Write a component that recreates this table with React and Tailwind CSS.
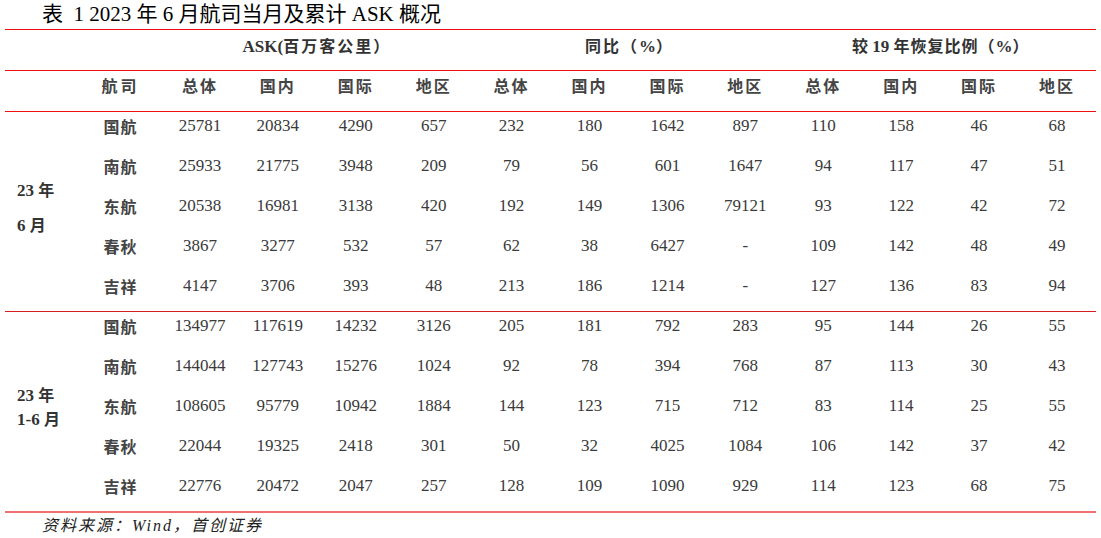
import React from "react";

const g1 = [
  ["国航", "25781", "20834", "4290", "657", "232", "180", "1642", "897", "110", "158", "46", "68"],
  ["南航", "25933", "21775", "3948", "209", "79", "56", "601", "1647", "94", "117", "47", "51"],
  ["东航", "20538", "16981", "3138", "420", "192", "149", "1306", "79121", "93", "122", "42", "72"],
  ["春秋", "3867", "3277", "532", "57", "62", "38", "6427", "-", "109", "142", "48", "49"],
  ["吉祥", "4147", "3706", "393", "48", "213", "186", "1214", "-", "127", "136", "83", "94"],
];
const g2 = [
  ["国航", "134977", "117619", "14232", "3126", "205", "181", "792", "283", "95", "144", "26", "55"],
  ["南航", "144044", "127743", "15276", "1024", "92", "78", "394", "768", "87", "113", "30", "43"],
  ["东航", "108605", "95779", "10942", "1884", "144", "123", "715", "712", "83", "114", "25", "55"],
  ["春秋", "22044", "19325", "2418", "301", "50", "32", "4025", "1084", "106", "142", "37", "42"],
  ["吉祥", "22776", "20472", "2047", "257", "128", "109", "1090", "929", "114", "123", "68", "75"],
];

const serif = { fontFamily: '"Liberation Serif", "Noto Sans CJK SC", serif' };
const cjk = { fontFamily: '"Noto Sans CJK SC", sans-serif' };

const sub = ["总体", "国内", "国际", "地区"];

function Rows({ rows }) {
  return (
    <div className="flex-1 flex flex-col">
      {rows.map((r, i) => (
        <div
          key={i}
          className={`grid grid-cols-[81px_repeat(12,1fr)] ${i === rows.length - 1 ? "h-[39px]" : "h-[40px]"} pt-[4px] leading-[20px] text-[#3a3a3a]`}
        >
          <div className="text-center text-[16px] font-semibold tracking-[1px] text-[#444]" style={cjk}>
            {r[0]}
          </div>
          {r.slice(1).map((v, j) => (
            <div key={j} className="text-center text-[17px]" style={serif}>
              {v}
            </div>
          ))}
        </div>
      ))}
    </div>
  );
}

export default function App() {
  return (
    <div className="w-[1101px] h-[538px] bg-white overflow-hidden" style={serif}>
      <div className="h-[29px] leading-[29px] pl-[42px] text-[21px] text-black whitespace-pre">
        表  1 2023 年 6 月航司当月及累计 ASK 概况
      </div>
      <div className="ml-[5px] w-[1091px]">
        <div className="h-[1px] bg-[#f01010]" />
        <div className="grid grid-cols-[156px_repeat(3,1fr)] h-[40px] pt-[5px] leading-[20px] text-[#333] font-bold">
          <div />
          <div className="text-center text-[17px]">
            ASK(<span className="text-[16px] tracking-[2px]" style={cjk}>百万客公里）</span>
          </div>
          <div className="text-center text-[17px]">
            <span className="text-[16px] tracking-[2px]" style={cjk}>同比（</span>%<span className="text-[16px]" style={cjk}>）</span>
          </div>
          <div className="text-center text-[17px]">
            <span className="text-[16px]" style={cjk}>较</span> 19 <span className="text-[16px] tracking-[1px]" style={cjk}>年恢复比例（</span>%<span className="text-[16px]" style={cjk}>）</span>
          </div>
        </div>
        <div className="h-[1px] bg-[#f01010]" />
        <div className="grid grid-cols-[75px_81px_repeat(12,1fr)] h-[40px] pt-[4px] leading-[20px] text-[#444] text-[16px] font-semibold" style={cjk}>
          <div />
          <div className="text-center tracking-[3px]">航司</div>
          {[0, 1, 2].flatMap((k) =>
            sub.map((s, j) => (
              <div key={`${k}-${j}`} className="text-center tracking-[2px]">
                {s}
              </div>
            ))
          )}
        </div>
        <div className="h-[1px] bg-[#f01010]" />
        <div className="flex">
          <div className="w-[75px] pl-[12px] pt-[67px] text-[#333] font-bold text-[17px] leading-[20px]">
            <div>
              23 <span className="text-[16px]" style={cjk}>年</span>
            </div>
            <div className="mt-[13px]">
              6 <span className="text-[16px]" style={cjk}>月</span>
            </div>
          </div>
          <Rows rows={g1} />
        </div>
        <div className="h-[1px] bg-[#d82020]" />
        <div className="flex">
          <div className="w-[75px] pl-[12px] pt-[71px] text-[#333] font-bold text-[17px] leading-[23px]">
            <div>
              23 <span className="text-[16px]" style={cjk}>年</span>
            </div>
            <div>
              1-6 <span className="text-[16px]" style={cjk}>月</span>
            </div>
          </div>
          <Rows rows={g2} />
        </div>
        <div className="h-[2px] bg-[#f07070]" />
      </div>
      <div className="pl-[42px] h-[22px] leading-[22px] italic text-[16px] text-[#222] tracking-[2px]">
        <span style={cjk}>资料来源：</span>Wind<span style={cjk}>，首创证券</span>
      </div>
    </div>
  );
}
